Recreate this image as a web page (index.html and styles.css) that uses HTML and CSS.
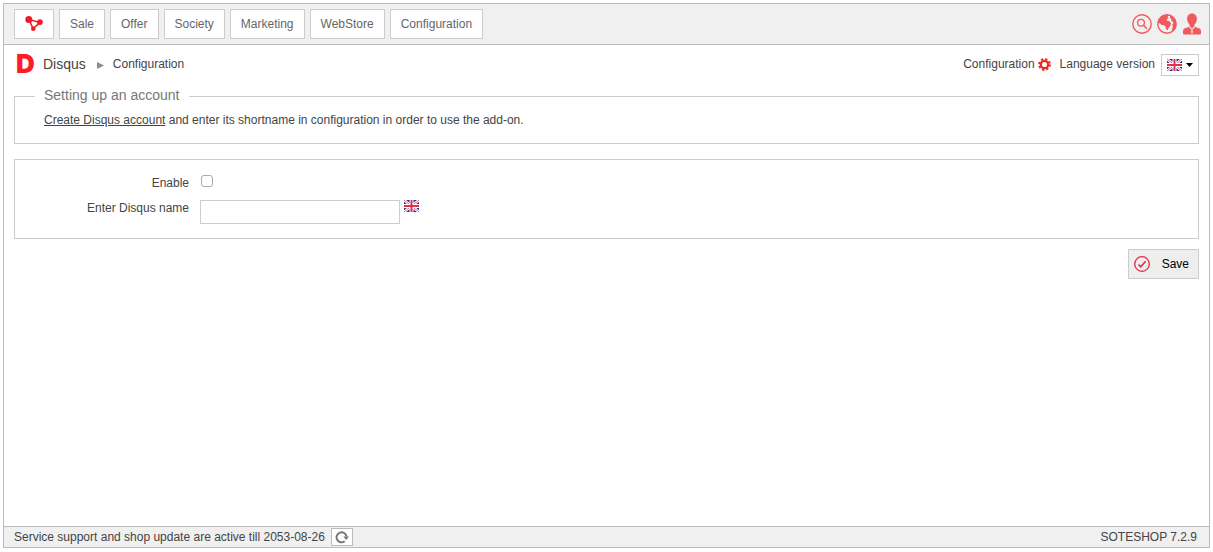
FILE: index.html
```html
<!DOCTYPE html>
<html lang="en">
<head>
  <meta charset="UTF-8" />
  <title>Disqus – Configuration</title>
  <link rel="stylesheet" href="styles.css">
</head>
<body>
  <svg class="symbols" aria-hidden="true">
    <symbol id="flag" viewBox="0 0 15 12">
      <rect width="15" height="12" rx="1" fill="#2b3584" />
      <path d="M0 0l15 12M15 0L0 12" stroke="#fff" stroke-width="2.6" />
      <path d="M0 0l15 12M15 0L0 12" stroke="#e46a80" stroke-width="1" />
      <path d="M7.500 0v12M0 6h15" stroke="#fff" stroke-width="4" />
      <path d="M7.500 0v12M0 6h15" stroke="#e0304c" stroke-width="2" />
    </symbol>
  </svg>

  <div class="app">
    <header class="topbar">
      <nav class="menu">
        <a href="#" class="menu-item" aria-label="Home">
          <svg width="18" height="16" viewBox="0 0 18 16">
            <path d="M4 3.500l11 3-7 6z" fill="none" stroke="#ee1c25" stroke-width="1.6" />
            <circle cx="3.800" cy="3.500" r="3.500" fill="#ee1c25" />
            <circle cx="14.900" cy="6.100" r="2.900" fill="#ee1c25" />
            <circle cx="8.300" cy="12.800" r="2.300" fill="#ee1c25" />
          </svg>
        </a>
        <a href="#" class="menu-item">Sale</a>
        <a href="#" class="menu-item">Offer</a>
        <a href="#" class="menu-item">Society</a>
        <a href="#" class="menu-item">Marketing</a>
        <a href="#" class="menu-item">WebStore</a>
        <a href="#" class="menu-item">Configuration</a>
      </nav>
      <div class="tools">
        <a href="#" aria-label="Search">
          <svg width="20" height="20" viewBox="0 0 20 20" fill="none" stroke="#f05a5e">
            <circle cx="10" cy="10" r="9.2" stroke-width="1.4" />
            <circle cx="9" cy="8.800" r="3.400" stroke-width="1.300" />
            <path d="M11.500 11.300l3.400 3.400" stroke-width="1.600" />
          </svg>
        </a>
        <a href="#" aria-label="Shop">
          <svg width="20" height="20" viewBox="0 0 20 20">
            <circle cx="10" cy="10" r="9.200" fill="#f0f0f0" stroke="#f05a5e" stroke-width="1.400" />
            <path d="M1 9C1.300 4 5 .8 10 .8l1.500.7-1 1.800 1.200 1-2 1.200.3 1.200 2.500.5 1.500 2.300-.7 2.500-2 2.200-.6 2-1.700-1-.5-2.700-1.500-1.200-2.500-.3L3 9.500z" fill="#f05a5e" />
            <path d="M13 1.500c3.500 1.300 6 4 6.300 8.500-.2 3-1.300 5.300-3.300 7l-1.200-1.500 1-2.500-.5-2.500 1.200-1.200-1-2-1.500-.5.500-1.800-1.500-1z" fill="#f05a5e" />
          </svg>
        </a>
        <a href="#" aria-label="Account">
          <svg width="20" height="22" viewBox="0 0 20 22">
            <path d="M10 .5c3.100 0 4.900 2.300 4.900 5.200 0 2.500-1 4.500-2.500 5.800v2.200l4.600 1.600c1.400.5 2 1.500 2 3v1.700c0 1-.5 1.500-1.500 1.500h-15c-1 0-1.500-.5-1.500-1.500v-1.700c0-1.500.6-2.500 2-3l4.600-1.600v-2.200C6.100 10.200 5.100 8.200 5.100 5.700 5.100 2.800 6.900.5 10 .5z" fill="#f05a5e" />
            <path d="M7.500 14l1.700 1.500M12.500 14l-1.700 1.500M10 15.500v5" fill="none" stroke="#f0f0f0" stroke-width="1.300" />
          </svg>
        </a>
      </div>
    </header>

    <main class="content">
      <div class="heading">
        <div class="breadcrumb">
          <span class="logo" aria-hidden="true">D</span>
          <h1>Disqus</h1>
          <svg class="arrow" width="7" height="7" viewBox="0 0 7 7"><path d="M0 0l7 3.500-7 3.500z" fill="#8c8c8c" /></svg>
          <span>Configuration</span>
        </div>
        <div class="options">
          <a href="#" class="config-link">Configuration
            <svg width="13" height="13" viewBox="0 0 13 13" fill="none" stroke="#ee2a24">
              <circle cx="6.500" cy="6.500" r="3.700" stroke-width="2.300" />
              <circle cx="6.500" cy="6.500" r="5.500" stroke-width="1.800" stroke-dasharray="2.320 2" />
            </svg>
          </a>
          <span>Language version</span>
          <button type="button" class="lang" aria-label="Language version: English">
            <svg width="15" height="12"><use href="#flag" /></svg>
            <svg width="7" height="4" viewBox="0 0 7 4"><path d="M0 0h7L3.500 4z" fill="#000" /></svg>
          </button>
        </div>
      </div>

      <fieldset class="panel account">
        <legend>Setting up an account</legend>
        <p><a href="#">Create Disqus account</a> and enter its shortname in configuration in order to use the add-on.</p>
      </fieldset>

      <form>
        <div class="panel fields">
          <label for="enable">Enable</label>
          <div class="field">
            <input type="checkbox" id="enable" name="enable" />
          </div>
          <label for="shortname">Enter Disqus name</label>
          <div class="field">
            <input type="text" id="shortname" name="shortname" />
            <svg width="15" height="12"><use href="#flag" /></svg>
          </div>
        </div>
        <div class="actions">
          <button type="submit" class="save">
            <svg width="16" height="16" viewBox="0 0 16 16" fill="none" stroke="#e8283c">
              <circle cx="8" cy="8" r="7.300" stroke-width="1.300" />
              <path d="M4.500 8.500l2.200 2.300 5-5.500" stroke-width="1.600" />
            </svg>
            Save
          </button>
        </div>
      </form>
    </main>

    <footer class="statusbar">
      <span>Service support and shop update are active till 2053-08-26</span>
      <button type="button" class="refresh" aria-label="Refresh">
        <svg width="14" height="14" viewBox="0 0 14 14">
          <path d="M9.700 11.200A5 5 0 1 1 11.500 6.500" fill="none" stroke="#777" stroke-width="2" />
          <path d="M8.300 6.500h5.700l-2.700 3.500z" fill="#777" />
        </svg>
      </button>
      <span class="version">SOTESHOP 7.2.9</span>
    </footer>
  </div>
</body>
</html>
```
FILE: styles.css
```css
* {
  box-sizing: border-box;
}
body {
  margin: 3px 3px 4px;
  background: #fff;
  color: #444;
  font-family: "Liberation Sans", Arial, sans-serif;
  font-size: 12px;
  line-height: 16px;
}
a {
  color: inherit;
  text-decoration: none;
}
svg {
  display: block;
  flex: none;
}
button, input {
  font: inherit;
  margin: 0;
}
button {
  cursor: pointer;
}
.symbols {
  position: absolute;
  width: 0;
  height: 0;
}
.app {
  display: flex;
  flex-direction: column;
  min-height: calc(100vh - 7px);
  border: 1px solid #bbb;
}

/* top menu */
.topbar {
  display: flex;
  justify-content: space-between;
  align-items: center;
  padding: 5px 7px 5px 10px;
  background: #f0f0f0;
  border-bottom: 1px solid #bbb;
}
.menu {
  display: flex;
  gap: 5px;
}
.menu-item {
  height: 30px;
  padding: 6px 10px;
  background: #fff;
  border: 1px solid #ccc;
  color: #666;
}
.tools {
  display: flex;
  align-items: center;
  gap: 5px;
}

/* page */
.content {
  flex: 1;
  padding: 8px 10px;
}
.heading {
  display: flex;
  justify-content: space-between;
}
.breadcrumb {
  display: flex;
  align-items: center;
  height: 22px;
}
.logo {
  width: 29px;
  padding-left: 2px;
  color: #ff1a24;
  font: 900 26px/22px Inter, Arial, sans-serif;
}
h1 {
  margin: 0;
  font-size: 14px;
  font-weight: normal;
}
.arrow {
  margin: 2px 9px 0 11px;
}
.options {
  display: flex;
  gap: 6px;
  line-height: 22px;
}
.config-link {
  display: flex;
  align-items: center;
  gap: 3px;
  height: 22px;
  margin-right: 3px;
}
.lang {
  display: flex;
  align-items: center;
  gap: 4px;
  height: 22px;
  margin-top: 1px;
  padding: 0 5px;
  background: #fff;
  border: 1px solid #ccc;
}
.panel {
  margin: 0;
  border: 1px solid #ccc;
}
.account {
  min-width: 0;
  margin-top: 11px;
  padding: 7px 29px 15px;
}
legend {
  margin-left: -9px;
  padding: 0 10px 2px 9px;
  color: #777;
  font-size: 14px;
  line-height: 16px;
}
.account p {
  margin: 0;
}
.account a {
  text-decoration: underline;
}
.fields {
  display: grid;
  grid-template-columns: 174px 1fr;
  gap: 9px 11px;
  margin-top: 15px;
  padding: 15px 0 14px;
}
.fields label {
  text-align: right;
}
.field {
  display: flex;
  align-items: flex-start;
  gap: 4px;
}
input[type="checkbox"] {
  appearance: none;
  width: 12px;
  height: 12px;
  margin-left: 1px;
  background: #fff;
  border: 1px solid #aaa;
  border-radius: 3px;
}
input[type="checkbox"]:checked {
  background: #777;
}
input[type="text"] {
  width: 200px;
  height: 24px;
  padding: 2px 5px;
  border: 1px solid #ccc;
}
.actions {
  display: flex;
  justify-content: flex-end;
  margin-top: 10px;
}
.save {
  display: flex;
  align-items: center;
  gap: 12px;
  height: 30px;
  padding: 0 9px 0 5px;
  background: #eee;
  border: 1px solid #ccc;
  color: #000;
}

/* bottom bar */
.statusbar {
  display: flex;
  align-items: center;
  gap: 6px;
  padding: 1px 12px 1px 10px;
  background: #f0f0f0;
  border-top: 1px solid #bbb;
}
.refresh {
  display: flex;
  align-items: center;
  height: 18px;
  padding: 0 3px;
  background: #fff;
  border: 1px solid #bbb;
}
.version {
  margin-left: auto;
}
```
